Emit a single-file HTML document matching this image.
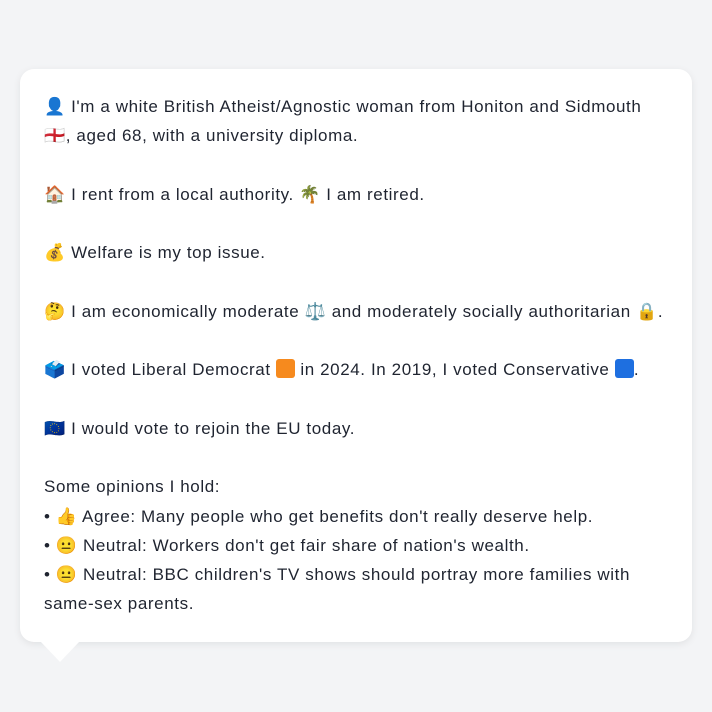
<!DOCTYPE html>
<html><head><meta charset="utf-8"><style>
html,body{margin:0;padding:0;width:712px;height:712px;background:#f3f4f6;overflow:hidden}
.card{position:absolute;left:20px;top:69px;width:672px;height:573px;background:#fff;border-radius:14px;box-shadow:0 2px 8px rgba(0,0,0,0.08)}
.tail{position:absolute;left:40px;top:641px;width:0;height:0;border-left:20px solid transparent;border-right:20px solid transparent;border-top:21px solid #fff}
.txt{position:absolute;left:44px;top:92px;width:630px;font-family:"Liberation Sans","Noto Sans CJK JP",sans-serif;font-size:17px;letter-spacing:0.6px;line-height:29.25px;color:#1f2430;white-space:pre-line}
.sq{display:inline-block;width:19px;height:19px;border-radius:3px;vertical-align:-3px}
</style></head><body>
<div class="card"></div><div class="tail"></div>
<div class="txt">👤 I'm a white British Atheist/Agnostic woman from Honiton and Sidmouth
🏴󠁧󠁢󠁥󠁮󠁧󠁿, aged 68, with a university diploma.

🏠 I rent from a local authority. 🌴 I am retired.

💰 Welfare is my top issue.

🤔 I am economically moderate ⚖️ and moderately socially authoritarian 🔒.

🗳️ I voted Liberal Democrat <span class="sq" style="background:#f68a1e"></span> in 2024. In 2019, I voted Conservative <span class="sq" style="background:#1e6fe0"></span>.

🇪🇺 I would vote to rejoin the EU today.

Some opinions I hold:
• 👍 Agree: Many people who get benefits don't really deserve help.
• 😐 Neutral: Workers don't get fair share of nation's wealth.
• 😐 Neutral: BBC children's TV shows should portray more families with same-sex parents.</div>
</body></html>
